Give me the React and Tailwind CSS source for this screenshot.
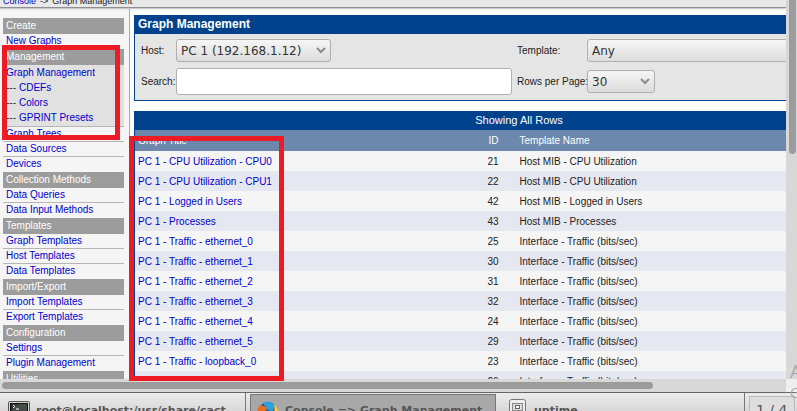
const sections = [
  { title: "Create", items: ["New Graphs"] },
  {
    title: "Management",
    group: { title: "Graph Management", items: ["CDEFs", "Colors", "GPRINT Presets"] },
    items: ["Graph Trees", "Data Sources", "Devices"],
  },
  { title: "Collection Methods", items: ["Data Queries", "Data Input Methods"] },
  { title: "Templates", items: ["Graph Templates", "Host Templates", "Data Templates"] },
  { title: "Import/Export", items: ["Import Templates", "Export Templates"] },
  { title: "Configuration", items: ["Settings", "Plugin Management"] },
  { title: "Utilities", items: [] },
];

const rows = [
  ["PC 1 - CPU Utilization - CPU0", 21, "Host MIB - CPU Utilization"],
  ["PC 1 - CPU Utilization - CPU1", 22, "Host MIB - CPU Utilization"],
  ["PC 1 - Logged in Users", 42, "Host MIB - Logged in Users"],
  ["PC 1 - Processes", 43, "Host MIB - Processes"],
  ["PC 1 - Traffic - ethernet_0", 25, "Interface - Traffic (bits/sec)"],
  ["PC 1 - Traffic - ethernet_1", 30, "Interface - Traffic (bits/sec)"],
  ["PC 1 - Traffic - ethernet_2", 31, "Interface - Traffic (bits/sec)"],
  ["PC 1 - Traffic - ethernet_3", 32, "Interface - Traffic (bits/sec)"],
  ["PC 1 - Traffic - ethernet_4", 24, "Interface - Traffic (bits/sec)"],
  ["PC 1 - Traffic - ethernet_5", 29, "Interface - Traffic (bits/sec)"],
  ["PC 1 - Traffic - loopback_0", 23, "Interface - Traffic (bits/sec)"],
  ["PC 1 - Traffic - loopback_1", 26, "Interface - Traffic (bits/sec)"],
];

function Sidebar() {
  return (
    <nav className="w-[130px] shrink-0 overflow-hidden border-r border-[#a8a8a8] bg-[#f5f5f5] pt-[10px] pr-[5px] pl-[3px]">
      {sections.map((s) => (
        <section key={s.title}>
          <h2 className="h-4 bg-[#9c9c9c] pl-[3px] text-[10px] leading-4 text-white">{s.title}</h2>
          {s.group && (
            <div className="border-b border-[#b5b5b5] bg-[#e1e1e1] pb-px pl-[3px]">
              <a href="#graphs" className="block h-[15px] text-[10px] leading-[15px] text-[#0000cc]">{s.group.title}</a>
              {s.group.items.map((i) => (
                <div key={i} className="flex h-[15px] gap-[3px] text-[10px] leading-[15px] text-[#333]">
                  <span>---</span>
                  <a href="#item" className="text-[#0000cc]">{i}</a>
                </div>
              ))}
            </div>
          )}
          <ul className="divide-y divide-[#b5b5b5]">
            {s.items.map((i) => (
              <li key={i} className="h-[15px] pl-[3px] text-[10px] leading-[14px] text-[#0000cc]">
                <a href="#item">{i}</a>
              </li>
            ))}
          </ul>
        </section>
      ))}
    </nav>
  );
}

function Select({ id, value, className }) {
  return (
    <div className={`relative h-[23px] ${className}`}>
      <select
        id={id}
        defaultValue={value}
        className="h-full w-full appearance-none rounded-[3px] border border-[#b0b0b0] bg-linear-to-b from-[#f6f6f6] to-[#dcdcdc] pl-1 font-['DejaVu_Sans'] text-[12px] text-[#333]"
      >
        <option>{value}</option>
      </select>
      <svg className="pointer-events-none absolute top-[8px] right-[5px]" width="10" height="7" viewBox="0 0 10 7" fill="none" stroke="#8a8a8a" strokeWidth="2">
        <path d="M1 1l4 4 4-4" />
      </svg>
    </div>
  );
}

function Filters() {
  return (
    <section className="border-b border-l border-[#00438c] bg-[#e5e5e5]">
      <h1 className="h-[19px] bg-[#00438c] pl-[3px] text-[12px] leading-[19px] font-bold text-white">Graph Management</h1>
      <form className="grid h-[66px] grid-cols-[35px_336px_75px_214px] grid-rows-[23px_27px] content-start items-center gap-y-[6px] pt-[5px] pl-[6px] text-[10px] text-[#222]">
        <label htmlFor="host">Host:</label>
        <Select id="host" value="PC 1 (192.168.1.12)" className="w-[155px]" />
        <label htmlFor="template" className="pl-[5px]">Template:</label>
        <Select id="template" value="Any" className="w-[214px]" />
        <label htmlFor="search">Search:</label>
        <input id="search" type="text" className="h-[27px] w-full rounded-[3px] border border-[#b0b0b0] bg-white px-1 font-['DejaVu_Sans'] text-[12px]" />
        <label htmlFor="rows" className="pl-[5px] whitespace-nowrap">Rows per Page:</label>
        <Select id="rows" value="30" className="w-[68px]" />
      </form>
    </section>
  );
}

function GraphTable() {
  return (
    <table className="mt-[10px] w-full table-fixed border-l border-[#00438c] text-[10px] text-[#222]">
      <caption className="h-[19px] bg-[#00438c] pl-[118px] text-center text-[11px] leading-[19px] text-white">Showing All Rows</caption>
      <colgroup>
        <col className="w-[324px]" />
        <col className="w-[40px]" />
        <col />
      </colgroup>
      <thead>
        <tr className="h-[21px] bg-[#6d88ad] text-left text-white">
          <th className="pl-[3px] font-normal">Graph Title**</th>
          <th className="text-right font-normal">ID</th>
          <th className="pl-[21px] font-normal">Template Name</th>
        </tr>
      </thead>
      <tbody>
        {rows.map(([title, id, template]) => (
          <tr key={id} className="h-5 odd:bg-[#f5f5f5] even:bg-[#e5e7f1]">
            <td className="pl-[3px]"><a href="#graph" className="text-[#0000cc]">{title}</a></td>
            <td className="text-right">{id}</td>
            <td className="pl-[21px]">{template}</td>
          </tr>
        ))}
      </tbody>
    </table>
  );
}

function TerminalIcon() {
  return (
    <svg width="22" height="22" viewBox="0 0 22 22" className="shrink-0">
      <rect x=".5" y=".5" width="21" height="21" rx="1" fill="#d5d5d0" stroke="#555" />
      <rect x="2.500" y="2.500" width="17" height="17" fill="#2b302f" stroke="#111" />
      <path d="M3 10h16V3H10z" fill="#444b49" />
      <path d="M5 4l2 1.500-2 1.500M8 8h3" fill="none" stroke="#fff" />
    </svg>
  );
}

function FirefoxIcon() {
  return (
    <svg width="22" height="22" viewBox="0 0 22 22" className="shrink-0">
      <circle cx="11" cy="11" r="10" fill="#1c5fa8" />
      <path d="M6 2c5-3 10-1 12 3l-3 6-5-3z" fill="#2fa0dc" />
      <path d="M2 5l2-1c1 1 3 1 5 2l1 2-2 2-1 2c0 3 3 4 6 3 4-1 5-4 4-8 4 4 4 9 0 13-5 5-13 4-16-2-2-4-1-8 1-13z" fill="#e8701a" />
      <path d="M17 3c5 4 6 11 1 16-2 2-5 3-8 2 7-2 9-9 7-18z" fill="#f7d43b" />
    </svg>
  );
}

function CabinetIcon() {
  return (
    <svg width="20" height="22" viewBox="0 0 20 22" className="shrink-0">
      <rect x="1.500" y=".5" width="16" height="21" rx="2" fill="#ededed" stroke="#777" />
      <rect x="4.500" y="4.500" width="10" height="7" fill="#ddd" stroke="#888" />
      <rect x="7.500" y="6.500" width="4" height="3" fill="#fff" stroke="#666" />
      <rect x="4.500" y="13.500" width="10" height="6" fill="#ddd" stroke="#888" />
    </svg>
  );
}

function Taskbar() {
  return (
    <footer className="flex h-[19px] shrink-0 items-start overflow-hidden border-t border-[#666] bg-linear-to-b from-[#ececec] to-[#d8d8d8] font-['DejaVu_Sans'] text-[11px] font-bold text-[#555]">
      <button type="button" className="flex h-8 w-[246px] shrink-0 gap-[6px] border-r border-[#777] pt-2 pl-2 text-left whitespace-nowrap">
        <TerminalIcon />
        <span className="leading-[20px]">root@localhost:/usr/share/cact</span>
      </button>
      <button type="button" className="mt-px ml-1 flex h-8 w-[246px] shrink-0 gap-[6px] border border-[#777] bg-[#a8a8a8] pt-[6px] pl-[6px] text-left whitespace-nowrap">
        <FirefoxIcon />
        <span className="leading-[20px]">Console =&gt; Graph Management</span>
      </button>
      <button type="button" className="flex h-8 flex-1 gap-[6px] border-r border-[#777] pt-[6px] pl-3 text-left">
        <CabinetIcon />
        <span className="leading-[24px]">uptime</span>
      </button>
      <div className="mt-[3px] mr-[2px] ml-1 h-8 w-[46px] shrink-0 border border-[#bbb] bg-[#dedede] pl-[6px] text-[14px] leading-[26px] font-normal whitespace-nowrap">1 / 4</div>
    </footer>
  );
}

export default function App() {
  return (
    <div className="relative flex h-screen flex-col overflow-hidden bg-[#d8d8d8] font-['Liberation_Sans',sans-serif]">
      <div className="flex min-h-0 flex-1">
        <div className="flex min-w-0 flex-1 flex-col">
          <header className="relative flex h-2 shrink-0 items-end gap-1 border-b border-[#909090] bg-[#e8e8e8] pl-[3px] text-[9px] leading-[12px] text-[#222] shadow-[0_1px_2px_#bbb]">
            <a href="#console" className="text-[#0000cc]">Console</a>
            <span>-&gt;</span>
            <span>Graph Management</span>
          </header>
          <div className="flex min-h-0 flex-1">
            <Sidebar />
            <main className="min-w-0 flex-1 overflow-hidden bg-white pt-[7px] pl-1">
              <Filters />
              <GraphTable />
            </main>
          </div>
          <div className="h-[13px] shrink-0 bg-[#d8d8d8] pt-[3px] pl-[2px]">
            <div className="h-[7px] w-[83%] rounded-full bg-[#9c9c9c]" />
          </div>
        </div>
        <div className="flex w-[11px] shrink-0 flex-col justify-between bg-[#d8d8d8]">
          <div className="mr-px ml-[3px] h-[154px] rounded-b-full bg-[#9c9c9c]" />
          <div className="h-[13px] bg-[#efefef]" />
        </div>
      </div>
      <Taskbar />
      <div className="pointer-events-none absolute top-[45px] left-[2px] h-[95px] w-[118px] border-[5px] border-[#ed1c24]" />
      <div className="pointer-events-none absolute top-[136px] left-[129px] h-[245px] w-[155px] border-[5px] border-[#ed1c24]" />
      <div className="pointer-events-none absolute top-[359px] left-[790px] font-['Open_Sans'] text-[#a8a8a8]">
        <div className="text-[18px] leading-[24px]">A</div>
        <div className="text-[14px] leading-[20px]">G</div>
      </div>
    </div>
  );
}
